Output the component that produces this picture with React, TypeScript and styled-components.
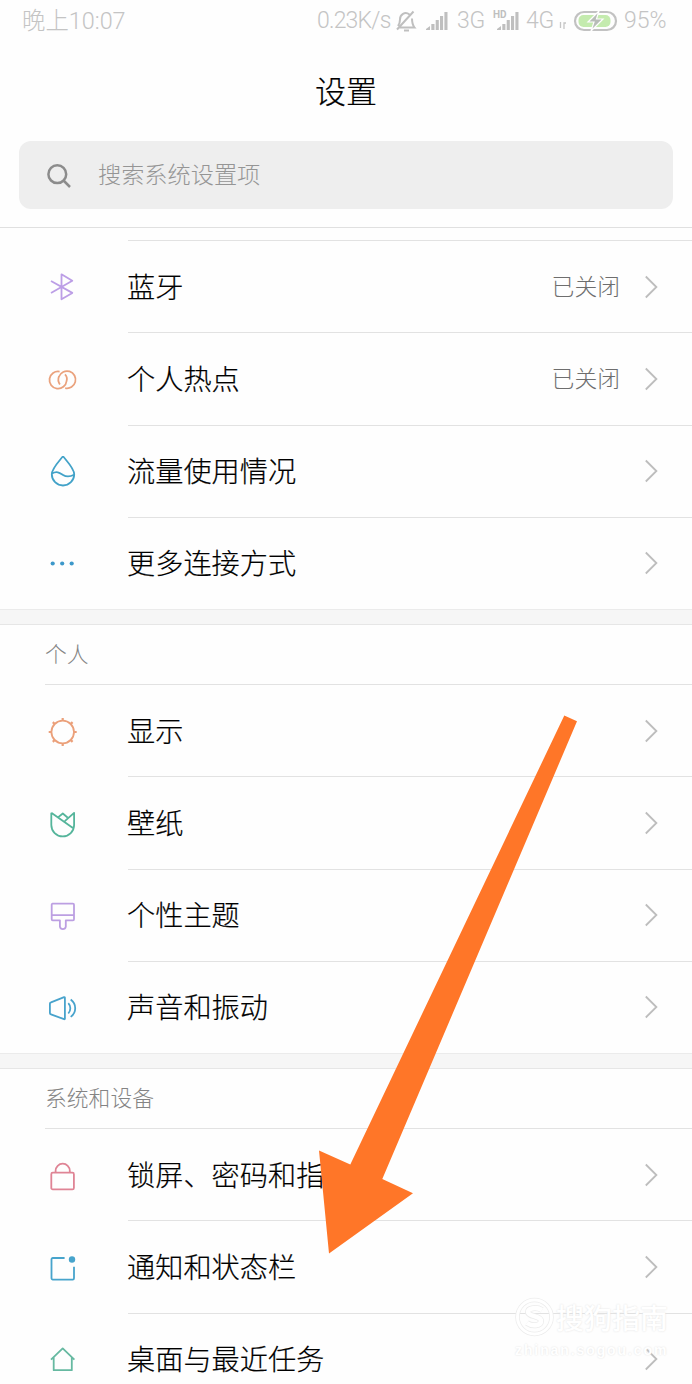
import React from "react";
import styled, { createGlobalStyle } from "styled-components";

const GlobalStyle = createGlobalStyle`
  * { box-sizing: border-box; }
  body {
    margin: 0;
    background: #fefefe;
    font-family: "Noto Sans CJK SC", sans-serif;
    font-weight: 300;
  }
`;

const Screen = styled.main`
  position: relative;
  width: 692px;
  height: 1384px;
  overflow: hidden;
  background: #fefefe;
`;

const StatusBar = styled.header`
  display: flex;
  align-items: center;
  justify-content: space-between;
  height: 42px;
  padding: 0 23px 0 22px;
  color: #c4c4c4;
  font-family: Roboto, "Noto Sans CJK SC", sans-serif;
  font-size: 23px;
  white-space: nowrap;
`;

const Clock = styled.span`
  width: 104px;
  padding-bottom: 4px;
  font-size: 23.4px;
  font-weight: 300;
`;

const StatusGroup = styled.div`
  display: flex;
  align-items: center;
  height: 42px;
`;

const StatusText = styled.span<{ $width: number; $gap?: number; $tracking?: number }>`
  width: ${(p) => p.$width}px;
  margin-right: ${(p) => p.$gap ?? 0}px;
  padding-bottom: 1px;
  letter-spacing: ${(p) => p.$tracking ?? 0}px;
  font-weight: 300;
`;

const StatusIcon = styled.svg<{ $gap?: number }>`
  flex: none;
  margin-right: ${(p) => p.$gap ?? 0}px;
  overflow: visible;
`;

const Title = styled.h1`
  margin: 0;
  height: 99px;
  line-height: 95px;
  text-align: center;
  font-size: 31px;
  font-weight: 300;
  color: #000;
  -webkit-text-stroke: 0.2px currentColor;
`;

const SearchBox = styled.div`
  display: flex;
  align-items: center;
  height: 68px;
  margin: 0 19px;
  padding: 0 27px;
  border-radius: 12px;
  background: #eee;
  color: #959595;
  font-size: 23.2px;
  line-height: 68px;
  svg { margin: 2px 26px 0 0; }
  span { margin-top: -4px; }
`;

const List = styled.div`
  margin-top: 18px;
  padding-top: 12px;
  border-top: 1px solid #e0e0e0;
`;

const Rows = styled.div`
  height: 369px;
`;

const Row = styled.div`
  display: flex;
  height: 92.25px;
  padding-left: 46px;
`;

const IconSlot = styled.div`
  width: 82px;
  padding-top: 31.5px;
`;

const RowBody = styled.div`
  flex: 1;
  display: flex;
  align-items: center;
  border-top: 1px solid #e2e2e2;
  padding-right: 34px;
`;

const Label = styled.span`
  flex: 1;
  margin-left: -1px;
  padding-bottom: 3px;
  font-size: 28.2px;
  color: #000;
  white-space: nowrap;
  -webkit-text-stroke: 0.2px currentColor;
`;

const Value = styled.span`
  margin-right: 24px;
  padding-bottom: 2px;
  font-size: 22.8px;
  color: #6e6e6e;
`;

const Band = styled.div`
  height: 16px;
  background: #f6f6f6;
  border-top: 1px solid #ebebeb;
  border-bottom: 1px solid #e6e6e6;
`;

const SectionTitle = styled.h2`
  margin: 0;
  height: 59px;
  padding-left: 45px;
  font-size: 21.8px;
  font-weight: 300;
  line-height: 55px;
  color: #848484;
`;

const SectionRows = styled(Rows)`
  ${Row}:first-child {
    padding-left: 45px;
  }
  ${Row}:first-child ${IconSlot} {
    width: 83px;
    padding-left: 1px;
    padding-top: 30.5px;
    border-top: 1px solid #e2e2e2;
  }
`;

const Pointer = styled.svg`
  position: absolute;
  left: 310px;
  top: 705px;
`;

const Watermark = styled.div`
  position: absolute;
  left: 515px;
  top: 1296px;
  width: 156px;
  color: #fff;
  text-shadow: 0 0 2px #dedede;
`;

const WatermarkBrand = styled.div`
  display: flex;
  align-items: center;
  gap: 2px;
  height: 42px;
  font-size: 28px;
  font-weight: 500;
  white-space: nowrap;
`;

const WatermarkSite = styled.div`
  height: 24px;
  font: 700 14px/24px "Liberation Sans", sans-serif;
  letter-spacing: 1.9px;
  white-space: nowrap;
`;

type IconName =
  | "bluetooth" | "hotspot" | "data" | "more" | "display"
  | "wallpaper" | "theme" | "sound" | "lock" | "notice" | "home";

const glyphs: Record<IconName, { color: string; art: React.ReactNode }> = {
  bluetooth: {
    color: "#bc9ee6",
    art: <path d="M5 9 26.300 20.900 15.500 27.300V2.300L26.300 8.800 5 21" />,
  },
  hotspot: {
    color: "#eaa27d",
    art: (
      <>
        <path d="M13.600 7.600A8.600 8.600 0 1 0 20.600 17C21.400 14.200 20.600 12 19 10.400" />
        <path d="M13.900 20.500C12.200 18 11.800 15.400 12.900 12.700A8.600 8.600 0 1 1 19.200 24.100" />
      </>
    ),
  },
  data: {
    color: "#42a2c8",
    art: (
      <>
        <path d="M17 0.300C12 6.500 5.800 12.700 5.800 18.300a11.200 11.200 0 0 0 22.400 0C28.200 12.700 22 6.500 17 0.300Z" />
        <path d="M6 17.500c5-3 8-.5 11 1.400s6.500 2.200 11-.2" />
      </>
    ),
  },
  more: {
    color: "#3d98ca",
    art: (
      <g fill="currentColor" stroke="none">
        <circle cx="6.700" cy="15.500" r="2.100" />
        <circle cx="16.200" cy="15.500" r="2.100" />
        <circle cx="25.700" cy="15.500" r="2.100" />
      </g>
    ),
  },
  display: {
    color: "#eba07a",
    art: (
      <>
        <circle cx="16.700" cy="16" r="11.300" />
        <path strokeWidth="2.200" d="M16.700 2v2.700M16.700 27.300V30M2.700 16h2.700M28 16h2.700M6.800 6.100l1.900 1.900M24.700 24l1.900 1.900M26.600 6.100 24.700 8M8.700 24l-1.900 1.900" />
      </>
    ),
  },
  wallpaper: {
    color: "#55b59b",
    art: (
      <>
        <path d="M5.300 4.800 28 20.700M5.300 4.800v12.200a11.400 11.400 0 0 0 22.800 0V4.800L18.800 13.200" />
        <path d="m12 9.400 4.800-3.900 5 4.200" />
      </>
    ),
  },
  theme: {
    color: "#bc9fe2",
    art: (
      <path d="M6.500 3.600h20.400a1.100 1.100 0 0 1 1.100 1.100v14.600a1 1 0 0 1-1 1h-7.200v6.300a3 3 0 0 1-5.900 0v-6.300H6.700a1 1 0 0 1-1-1V4.600a1 1 0 0 1 .8-1ZM5.700 15.200H28" />
    ),
  },
  sound: {
    color: "#48a3cc",
    art: (
      <>
        <path d="M18.100 5.100 5 10.400a1.500 1.500 0 0 0-1.100 1.500v9a1.500 1.500 0 0 0 1.100 1.500l13.100 4.800a.6.600 0 0 0 .8-.6V5.700a.6.600 0 0 0-.8-.6Z" />
        <path d="M22.300 11.100c2.700 2.900 2.700 7.500 0 10.400M24.700 7.500c6 4.500 6 12.900 0 17.400" />
      </>
    ),
  },
  lock: {
    color: "#df8495",
    art: (
      <>
        <rect x="5.300" y="12.700" width="22.600" height="16.700" rx="1.500" />
        <path d="M9.600 12.500v-1.700a7.100 7.100 0 0 1 14.200 0v1.700" />
      </>
    ),
  },
  notice: {
    color: "#47a4cc",
    art: (
      <>
        <path d="M18.600 6H6.800a1.300 1.300 0 0 0-1.300 1.300v19a1.300 1.300 0 0 0 1.300 1.300h19.900a1.300 1.300 0 0 0 1.300-1.300V14.700" />
        <circle cx="26" cy="7.500" r="3.200" fill="currentColor" stroke="none" />
      </>
    ),
  },
  home: {
    color: "#66b9a1",
    art: <path d="m5 15.700 11.700-11.300 11.700 11.300M7.700 13.500v12.700h18.100V13.500" />,
  },
};

const RowIcon = ({ name }: { name: IconName }) => (
  <svg
    width="34"
    height="34"
    viewBox="0 0 34 34"
    fill="none"
    color={glyphs[name].color}
    stroke="currentColor"
    strokeWidth="1.8"
    strokeLinejoin="round"
  >
    {glyphs[name].art}
  </svg>
);

const Chevron = () => (
  <svg width="14" height="24" viewBox="0 0 14 24" fill="none" stroke="#bdbdbd" strokeWidth="1.8">
    <path d="m1.800 1.500 10.600 10.500L1.800 22.500" />
  </svg>
);

const Signal = ({ gap }: { gap: number }) => (
  <StatusIcon $gap={gap} width="22" height="20" viewBox="0 0 22 20" fill="#bfbfbf">
    <path d="M0 19v-1l4-3v4ZM5.300 13H8.500v6H5.300ZM9.700 9h3.100v10H9.700ZM14 5h3.100v14H14ZM18.400 1h3.100v18h-3.100Z" />
  </StatusIcon>
);

const Setting = ({ icon, label, value }: { icon: IconName; label: string; value?: string }) => (
  <Row>
    <IconSlot><RowIcon name={icon} /></IconSlot>
    <RowBody>
      <Label>{label}</Label>
      {value && <Value>{value}</Value>}
      <Chevron />
    </RowBody>
  </Row>
);

export default function App() {
  return (
    <>
      <GlobalStyle />
      <Screen>
        <StatusBar>
          <Clock>晚上10:07</Clock>
          <StatusGroup>
            <StatusText $width={75} $gap={4} $tracking={-0.8}>0.23K/s</StatusText>
            <StatusIcon $gap={10} width="20" height="22" viewBox="0 0 20 22" fill="none" stroke="#bfbfbf" strokeWidth="2">
              <path d="M3 17.500h15.500c-2-2.500-2.500-4-2.500-9M13.500 4.500C9 1 3.800 4.500 4 9.500c0 3-.5 4.500-2 6.500M1 19.500 17.500 1.500M8 20.500h5" />
            </StatusIcon>
            <Signal gap={9} />
            <StatusText $width={30} $gap={7} $tracking={-0.3}>3G</StatusText>
            <StatusIcon $gap={7} width="25" height="24" viewBox="0 0 25 24" fill="#bfbfbf">
              <text x="-1" y="9" fontFamily="Roboto" fontSize="10" fontWeight="700">HD</text>
              <path d="M3 21v-1l4-3v4ZM8.300 15h3.100v6H8.300ZM12.700 11h3.100v10h-3.100ZM17 7h3.100v14H17ZM21.400 3h3.100v18h-3.100Z" />
            </StatusIcon>
            <StatusText $width={30} $gap={3} $tracking={-0.3}>4G</StatusText>
            <StatusIcon $gap={7} width="8" height="20" viewBox="0 0 8 20" fill="none" stroke="#c6c6c6" strokeWidth="1.300">
              <path d="M1.500 11v6M5 18v-6h2" />
            </StatusIcon>
            <StatusIcon $gap={7} width="43" height="20" viewBox="0 0 43 20">
              <rect x="1" y="1" width="41" height="18" rx="9" fill="#fefefe" stroke="#c2c2c2" strokeWidth="2.200" />
              <rect x="4.500" y="4" width="32" height="12" rx="5" fill="#c4ebae" />
              <path d="m25 0-11 11h6l-3 9 12-12h-6.500Z" fill="#b8bdb8" stroke="#fefefe" strokeWidth="1.200" />
            </StatusIcon>
            <StatusText $width={45}>95%</StatusText>
          </StatusGroup>
        </StatusBar>
        <Title>设置</Title>
        <SearchBox>
          <svg width="26" height="26" viewBox="0 0 26 26" fill="none" stroke="#8c8c8c" strokeWidth="2.500">
            <circle cx="11.300" cy="11.200" r="8.900" />
            <path d="m17.500 17.500 6.500 6.500" />
          </svg>
          <span>搜索系统设置项</span>
        </SearchBox>
        <List>
          <Rows>
            <Setting icon="bluetooth" label="蓝牙" value="已关闭" />
            <Setting icon="hotspot" label="个人热点" value="已关闭" />
            <Setting icon="data" label="流量使用情况" />
            <Setting icon="more" label="更多连接方式" />
          </Rows>
          <Band />
          <SectionTitle>个人</SectionTitle>
          <SectionRows>
            <Setting icon="display" label="显示" />
            <Setting icon="wallpaper" label="壁纸" />
            <Setting icon="theme" label="个性主题" />
            <Setting icon="sound" label="声音和振动" />
          </SectionRows>
          <Band />
          <SectionTitle>系统和设备</SectionTitle>
          <SectionRows>
            <Setting icon="lock" label="锁屏、密码和指纹" />
            <Setting icon="notice" label="通知和状态栏" />
            <Setting icon="home" label="桌面与最近任务" />
          </SectionRows>
        </List>
        <Watermark>
          <WatermarkBrand>
            <svg width="39" height="40" viewBox="0 0 39 40" fill="none">
              <circle cx="19.500" cy="20" r="17" stroke="#ececec" strokeWidth="4.500" />
              <circle cx="19.500" cy="20" r="17" stroke="#fff" strokeWidth="3" />
              <path d="M27 13c-5-3-14-2.500-14 2s13 4 13 9-9 5.500-14 2" stroke="#ececec" strokeWidth="6" />
              <path d="M27 13c-5-3-14-2.500-14 2s13 4 13 9-9 5.500-14 2" stroke="#fff" strokeWidth="4.500" />
            </svg>
            <span>搜狗指南</span>
          </WatermarkBrand>
          <WatermarkSite>zhinan.sogou.com</WatermarkSite>
        </Watermark>
        <Pointer width="280" height="560" viewBox="310 705 280 560">
          <path d="M564.300 715.500 577 721.300 382.300 1179 413 1193.300 329 1253.500 319 1150.500 350.300 1164.500Z" fill="#ff7628" />
        </Pointer>
      </Screen>
    </>
  );
}
